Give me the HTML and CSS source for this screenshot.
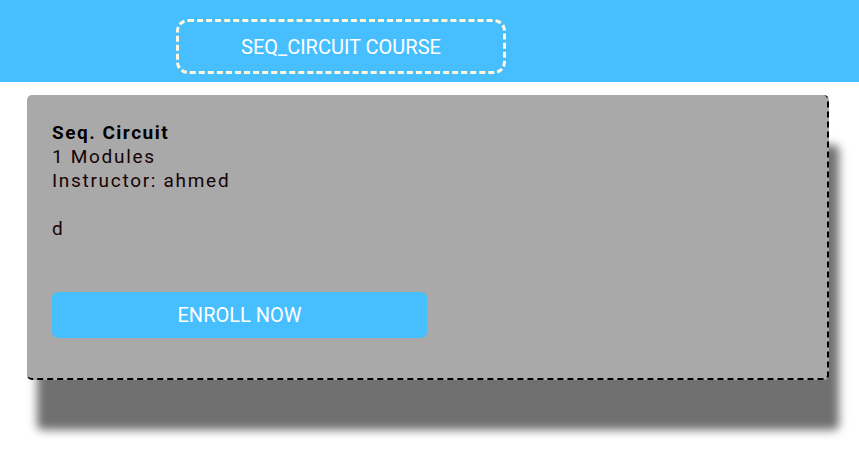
FILE: index.html
```html
<!DOCTYPE html>
<html>
<head>
<meta charset="utf-8">
<link rel="stylesheet" href="styles.css">
</head>
<body>
<header class="topbar">
  <div class="course-tag">SEQ_CIRCUIT COURSE</div>
</header>
<main class="content">
  <section class="card">
    <div class="title">Seq. Circuit</div>
    <div class="line">1 Modules</div>
    <div class="line">Instructor: ahmed</div>
    <div class="line desc">d</div>
    <button class="enroll">ENROLL NOW</button>
  </section>
</main>
</body>
</html>
```
FILE: styles.css
```css
html, body {
  margin: 0;
  padding: 0;
  background: #ffffff;
  font-family: Roboto, "Liberation Sans", sans-serif;
}
body {
  min-height: 456px;
}
.topbar {
  background: #47bfff;
  height: 82px;
  box-sizing: border-box;
  padding: 19px 0 0 176px;
}
.course-tag {
  width: 330px;
  height: 55px;
  box-sizing: border-box;
  border: 3px dashed #fff6dc;
  border-radius: 12px;
  display: flex;
  align-items: center;
  justify-content: center;
  color: #ffffff;
  font-size: 20px;
}
.content {
  padding: 13px 30px 80px 27px;
}
.card {
  background: #a9a9a9;
  border-right: 2px dashed #000;
  border-bottom: 2px dashed #000;
  border-radius: 5px;
  box-shadow: 10px 50px 10px #707070;
  padding: 26px 25px 40px 25px;
  height: 285px;
  box-sizing: border-box;
  display: flex;
  flex-direction: column;
  align-items: flex-start;
  font-size: 19px;
  line-height: 24px;
  color: #150303;
  letter-spacing: 1.7px;
}
.title {
  font-weight: bold;
  color: #000;
  letter-spacing: 1.5px;
}
.desc {
  margin-top: 24px;
}
.enroll {
  margin-top: 51px;
  width: 375px;
  height: 48px;
  border: none;
  border-radius: 6px;
  background: #47bfff;
  color: #fff;
  font-family: Roboto, "Liberation Sans", sans-serif;
  font-size: 20px;
  letter-spacing: 0;
  padding: 0;
}
```
